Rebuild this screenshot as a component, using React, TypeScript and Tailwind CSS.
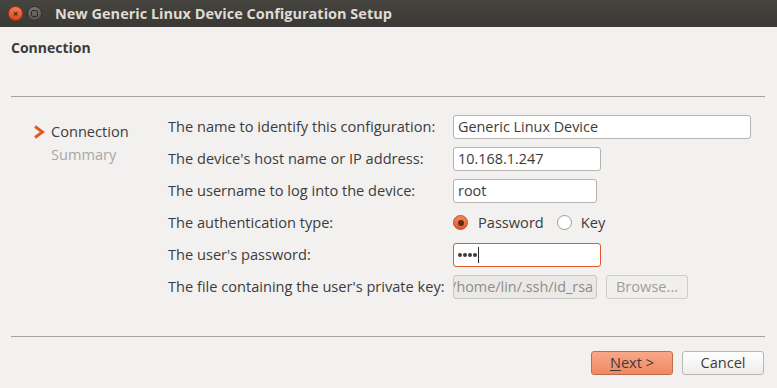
import React from "react";

const font = { fontFamily: '"Open Sans", "DejaVu Sans", sans-serif' };

const Field = ({
  w,
  value,
  focused,
}: {
  w: string;
  value: React.ReactNode;
  focused?: boolean;
}) => (
  <div
    className={`${w} h-[24px] flex items-center px-[4px] bg-white rounded-[3px] border text-[14.4px] text-[#3c3c3c] ${
      focused ? "border-[#e0592a]" : "border-[#b6b2ad]"
    }`}
  >
    {value}
  </div>
);

const Row = ({ label, children }: { label: string; children: React.ReactNode }) => (
  <div className="flex items-center h-[24px]">
    <div className="w-[285px] text-[14.6px] text-[#3c3c3c] whitespace-nowrap">{label}</div>
    {children}
  </div>
);

export default function App() {
  return (
    <div className="w-[777px] h-[388px] bg-[#f2f1f0] flex flex-col overflow-hidden" style={font}>
      {/* title bar */}
      <div className="h-[27px] flex items-center bg-gradient-to-b from-[#45443f] to-[#3a3935] shrink-0">
        <div className="ml-[8px] w-[15px] h-[15px] rounded-full bg-gradient-to-b from-[#f37a52] to-[#de4815] border border-[#9f3a17] flex items-center justify-center">
          <span className="text-[9px] leading-none text-[#3a1a0e] font-bold">×</span>
        </div>
        <div className="ml-[4px] w-[15px] h-[15px] rounded-full bg-gradient-to-b from-[#77766f] to-[#55544f] border border-[#2f2e2b] flex items-center justify-center">
          <div className="w-[7px] h-[7px] border border-[#2e2d29] rounded-[2px]" />
        </div>
        <div className="ml-[13px] text-[14.5px] font-bold text-[#dfdbd2]">
          New Generic Linux Device Configuration Setup
        </div>
      </div>

      {/* page header */}
      <div className="h-[69px] shrink-0 pl-[11px] pt-[10px]">
        <div className="text-[14px] font-bold text-[#3c3c3c]">Connection</div>
      </div>
      <div className="mx-[11px] mr-[12px] border-t border-[#a5a3a0]" />

      {/* content */}
      <div className="flex-1 flex pt-[18px]">
        <div className="w-[168px] shrink-0 pl-[33px] pt-[5px]">
          <div className="flex items-center h-[23px]">
            <svg width="12" height="14" viewBox="0 0 12 14" className="mr-[6px]">
              <path d="M2 1.5 L9.5 7 L2 12.5" fill="none" stroke="#e05a25" strokeWidth="3" strokeLinejoin="miter" />
            </svg>
            <span className="text-[14.6px] text-[#3c3c3c]">Connection</span>
          </div>
          <div className="pl-[18px] h-[23px] flex items-center text-[14.6px] text-[#a9a7a4]">Summary</div>
        </div>
        <div className="flex flex-col gap-[8px]">
          <Row label="The name to identify this configuration:">
            <Field w="w-[298px]" value="Generic Linux Device" />
          </Row>
          <Row label="The device's host name or IP address:">
            <Field w="w-[148px]" value="10.168.1.247" />
          </Row>
          <Row label="The username to log into the device:">
            <Field w="w-[144px]" value="root" />
          </Row>
          <Row label="The authentication type:">
            <div className="flex items-center text-[14.6px] text-[#3c3c3c]">
              <div className="w-[15px] h-[15px] rounded-full bg-gradient-to-b from-[#f08a5f] to-[#dc5a28] border border-[#b94c22] flex items-center justify-center">
                <div className="w-[6px] h-[6px] rounded-full bg-[#6a2a12]" />
              </div>
              <span className="ml-[10px]">Password</span>
              <div className="ml-[13px] w-[15px] h-[15px] rounded-full bg-white border border-[#9e9a95]" />
              <span className="ml-[9px]">Key</span>
            </div>
          </Row>
          <Row label="The user's password:">
            <Field
              w="w-[148px]"
              focused
              value={
                <span className="flex items-center">
                  <span className="flex gap-[1px]">
                    <span className="w-[4px] h-[4px] rounded-full bg-[#3c3c3c]" />
                    <span className="w-[4px] h-[4px] rounded-full bg-[#3c3c3c]" />
                    <span className="w-[4px] h-[4px] rounded-full bg-[#3c3c3c]" />
                    <span className="w-[4px] h-[4px] rounded-full bg-[#3c3c3c]" />
                  </span>
                  <span className="ml-[1px] w-px h-[16px] bg-[#2c2c2c]" />
                </span>
              }
            />
          </Row>
          <div className="flex items-center h-[24px]">
            <div className="w-[285px] text-[14.6px] text-[#3c3c3c] whitespace-nowrap">
              The file containing the user's private key:
            </div>
            <div className="w-[144px] h-[24px] flex items-center justify-end pr-[3px] overflow-hidden bg-[#ebe9e6] rounded-[3px] border border-[#c9c6c1] text-[14.4px] text-[#8f8c88] whitespace-nowrap">
              /home/lin/.ssh/id_rsa
            </div>
            <div className="ml-[9px] w-[82px] h-[24px] flex items-center justify-center rounded-[3px] border border-[#d0cdc8] bg-[#f0efed] text-[14.6px] text-[#a19e9a]">
              Browse...
            </div>
          </div>
        </div>
      </div>

      <div className="mx-[11px] mr-[12px] border-t border-[#a5a3a0]" />
      <div className="h-[51px] shrink-0 flex items-start justify-end pr-[13px] pt-[14px] gap-[9px]">
        <div className="w-[82px] h-[24px] flex items-center justify-center rounded-[3px] border border-[#c06c4b] bg-gradient-to-b from-[#f8a888] to-[#ef8862] text-[14.6px] text-[#3c3c3c]">
          <span className="underline underline-offset-2">N</span>ext &gt;
        </div>
        <div className="w-[82px] h-[24px] flex items-center justify-center rounded-[3px] border border-[#b9b5b0] bg-gradient-to-b from-white to-[#eeedeb] text-[14.6px] text-[#3c3c3c]">
          Cancel
        </div>
      </div>
    </div>
  );
}
